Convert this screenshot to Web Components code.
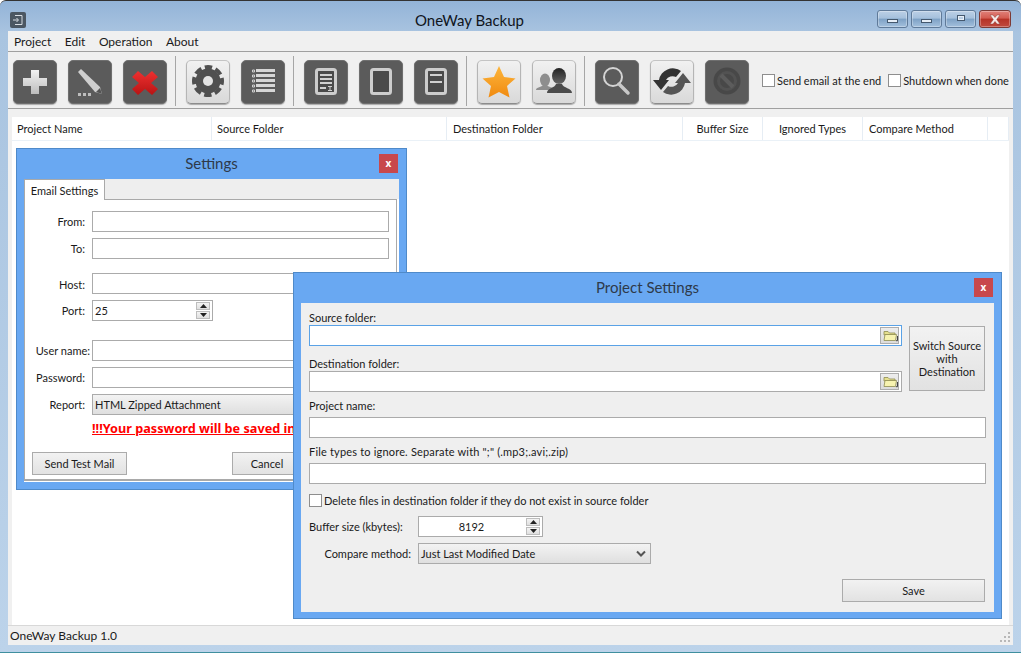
<!DOCTYPE html>
<html><head><meta charset="utf-8">
<style>
html,body{margin:0;padding:0;width:1021px;height:653px;overflow:hidden;background:#fff}
body{font:11px Lato,"Noto Sans",sans-serif;color:#1a1a1a}
</style></head><body>
<app-window>
  <win-controls slot="controls"></win-controls>
  <menu-bar slot="menu"></menu-bar>
  <tool-bar slot="tools"></tool-bar>
  <table-head slot="head"></table-head>
  <settings-dialog></settings-dialog>
  <project-dialog></project-dialog>
</app-window>
<script>
function def(name, css, html){
  customElements.define(name, class extends HTMLElement{
    connectedCallback(){
      if(this.shadowRoot) return;
      const r=this.attachShadow({mode:'open'});
      r.innerHTML='<style>'+css+'</style>'+(typeof html==='function'?html(this):html);
    }
  });
}
const FONT='font-family:Lato,"Noto Sans",sans-serif;font-size:11px;';
const DOCFRAME=`<rect x="12.500" y="9.500" width="19" height="24" rx="2" fill="#4a4a4a" stroke="#cdcdcd" stroke-width="3"/>`;
const ICONS={
plus:`<defs><linearGradient id="g" x1="0" y1="0" x2="0" y2="1"><stop offset="0" stop-color="#f2f2f2"/><stop offset="1" stop-color="#bdbdbd"/></linearGradient></defs><path d="M18 10h8v8h8v8h-8v8h-8v-8h-8v-8h8z" fill="url(#g)"/>`,
pencil:`<path d="M10 12l3-3 19 18 2 7-7-2z" fill="#cfcfcf"/><path d="M28 32l4-4 2 6z" fill="#555"/><path d="M10 33h3v3h-3zM15 33h3v3h-3zM20 33h3v3h-3z" fill="#bdbdbd"/>`,
x:`<defs><linearGradient id="g" x1="0" y1="0" x2="0" y2="1"><stop offset="0" stop-color="#ee3030"/><stop offset="1" stop-color="#b81414"/></linearGradient></defs><path d="M15 11l7 6 7-6 6 6-7 6 7 6-6 6-7-6-7 6-6-6 7-6-7-6z" fill="url(#g)"/>`,
gear:`<circle cx="22" cy="21" r="12.500" fill="#505050"/><circle cx="22" cy="21" r="14" fill="none" stroke="#505050" stroke-width="4" stroke-dasharray="7.400 3.600" stroke-dashoffset="3.700"/><circle cx="22" cy="21" r="5" fill="#e4e4e4"/>`,
list:`<g fill="none" stroke="#cfcfcf"><path d="M11.500 10h2v2h-2zM11.500 15h2v2h-2zM11.500 20h2v2h-2zM11.500 25h2v2h-2zM11.500 30h2v2h-2z"/></g><path d="M15 9h19v3H15zM15 14h19v3H15zM15 19h19v3H15zM15 24h19v3H15zM15 29h19v3H15z" fill="#d6d6d6"/>`,
doctext:DOCFRAME+`<path d="M16 14h12v2H16zM16 18h12v2H16zM16 22h12v2H16zM16 27h6v2h-6zM24 26h4v1h-1.500v3H28v1h-4v-1h1.500v-3H24z" fill="#d0d0d0"/>`,
tablet:DOCFRAME,
doc:DOCFRAME+`<path d="M16 14h12v2H16zM16 21h12v2H16z" fill="#d0d0d0"/>`,
star:`<defs><linearGradient id="g" x1="0" y1="0" x2="0" y2="1"><stop offset="0" stop-color="#fdb63c"/><stop offset="1" stop-color="#f08a10"/></linearGradient></defs><path d="M22 6l5 11 11.500 1.500-8.500 7.500 2.500 11.500L22 32l-10.500 5.500L14 26l-8.500-7.500L17 17z" fill="url(#g)"/>`,
users:`<defs><linearGradient id="g" x1="0" y1="0" x2="0" y2="1"><stop offset="0" stop-color="#222"/><stop offset="1" stop-color="#666"/></linearGradient></defs><ellipse cx="13" cy="20" rx="5" ry="6.500" fill="#8e8e8e"/><path d="M4 30c0-3 6-3 7-5h4c1 2 5 2 6 3v2z" fill="#8e8e8e"/><ellipse cx="27" cy="16" rx="7" ry="8" fill="url(#g)"/><path d="M15 33c0-5 8-5 9-9h6c1 4 10 4 10 9z" fill="#4c4c4c"/>`,
search:`<circle cx="18" cy="17" r="9" fill="none" stroke="#d4d4d4" stroke-width="2"/><path d="M24 24l9 9" stroke="#c9c9c9" stroke-width="3.500" stroke-linecap="round"/>`,
refresh:`<path d="M9 20A14 14 0 0 1 31 11L26 17A7.500 7.500 0 0 0 16 20zM3 20H19L11 30z" fill="#333"/><path d="M35 23A14 14 0 0 1 13 32L18 26A7.500 7.500 0 0 0 28 23zM25 23H41L33 13z" fill="#555"/>`,
stop:`<circle cx="22" cy="21" r="13.500" fill="#484848"/><circle cx="22" cy="21" r="8.500" fill="none" stroke="#525252" stroke-width="3"/><path d="M16 15l12 12" stroke="#5c5c5c" stroke-width="4"/>`
};
def('tool-button',`
:host{display:block;width:44px;height:44px;flex:none}
div{width:44px;height:44px;box-sizing:border-box;border-radius:5px;border:1px solid #6f6f6f;background:#5b5b5b;box-shadow:0 1px 1px #aaa}
:host([light]) div{background:linear-gradient(#f1f1f1,#d9d9d9);border-color:#c4c4c4 #b5b5b5 #8c8c8c}
svg{display:block;margin:-1px}
`,h=>`<div><svg width="44" height="44" viewBox="0 0 44 44">${ICONS[h.getAttribute('icon')]}</svg></div>`);
def('tool-sep',`:host{display:block;width:1px;height:50px;background:#a6a6a6;flex:none;margin:-2px 10px 0 8px;align-self:center}`,'');
def('check-box',`
:host{display:inline-flex;align-items:center;gap:2px;white-space:nowrap}
i{display:block;width:11px;height:11px;border:1px solid #8e8e8e;background:#fff;flex:none}
`,`<i></i><span><slot></slot></span>`);
def('tool-bar',`
:host{display:flex;align-items:center;height:56px;padding:4px 0 0 5px;box-sizing:border-box}
.g{display:flex;gap:11px}
check-box{margin-top:-3px}
`,`<div class="g"><tool-button icon="plus"></tool-button><tool-button icon="pencil"></tool-button><tool-button icon="x"></tool-button></div><tool-sep></tool-sep>
<div class="g"><tool-button icon="gear" light></tool-button><tool-button icon="list"></tool-button></div><tool-sep></tool-sep>
<div class="g"><tool-button icon="doctext"></tool-button><tool-button icon="tablet"></tool-button><tool-button icon="doc"></tool-button></div><tool-sep></tool-sep>
<div class="g"><tool-button icon="star" light></tool-button><tool-button icon="users" light></tool-button></div><tool-sep></tool-sep>
<div class="g"><tool-button icon="search"></tool-button><tool-button icon="refresh" light></tool-button><tool-button icon="stop"></tool-button></div>
<check-box style="margin-left:13px">Send email at the end</check-box><check-box style="margin-left:7px">Shutdown when done</check-box>`);
def('menu-bar',`
:host{display:flex;height:20px;align-items:center;padding-left:6px;gap:13.500px;font-size:12px;border-bottom:1px solid #a0a0a0;background:#f0f0f0;box-sizing:content-box}
`,`<span>Project</span><span>Edit</span><span>Operation</span><span>About</span>`);
def('table-head',`
:host{display:grid;grid-template-columns:200px 235px 236px 80px 100px 125px 1fr;height:23px;background:#fff;border-bottom:1px solid #eaf1f7;box-sizing:content-box}
span{display:flex;align-items:center;border-right:1px solid #e6edf4;white-space:nowrap}
.c{justify-content:center}
`,`<span style="padding-left:5px">Project Name</span><span style="padding-left:5px">Source Folder</span><span style="padding-left:6px">Destination Folder</span><span class="c">Buffer Size</span><span class="c">Ignored Types</span><span style="padding-left:6px">Compare Method</span><span></span>`);
def('win-controls',`
:host{display:flex;gap:3px;position:absolute;right:10px;top:9px}
b{display:flex;align-items:center;justify-content:center;width:31px;height:18px;box-sizing:border-box;border:1px solid #5f7a99;border-radius:3px;background:linear-gradient(#bcd0e6 0,#a5c0dc 45%,#7ea1c5 50%,#a3c0dd 100%);box-shadow:inset 0 0 0 1px rgba(255,255,255,.3)}
b.r{width:32px;background:linear-gradient(#e0827a 0,#d45b50 45%,#b63226 50%,#c04a3e 100%);border-color:#7d3a35}
i{display:block;width:9px;height:2px;background:#e6eef7;border:1px solid #44586e;margin-top:3px}
i.m{width:6px;height:4px;margin:-2px 0 0;background:#b9cee4;border-width:1px;box-shadow:inset 0 0 0 1px #e6eef7}
svg{display:block}
`,`<b><i></i></b><b><i></i></b><b><i class="m"></i></b><b class="r"><svg width="14" height="11" viewBox="0 0 14 11"><path d="M2 1h3l2 2.500L9 1h3L8.700 5.500 12 10H9L7 7.500 5 10H2l3.300-4.500z" fill="#f6ecea" stroke="#8a3d36" stroke-width=".5"/></svg></b>`);
def('app-window',`
:host{display:flex;flex-direction:column;position:relative;width:1021px;height:653px;box-sizing:border-box;padding:0 8px 7px;border-radius:6px 6px 0 0;
 background:linear-gradient(#93b4d8 0,#a9c4e0 32px,#bcd3ea 100%);border-top:1px solid #333;border-bottom:1px solid #3f8f9f;${FONT}}
.title{height:30px;flex:none;display:flex;align-items:center;justify-content:center;font-size:15px;color:#10151c;padding:7px 82px 0 0;box-sizing:border-box}
.ico{position:absolute;left:10px;top:11px;width:16px;height:16px}
.client{flex:1;display:flex;flex-direction:column;background:#f0f0f0;min-height:0}
.body{flex:1;display:flex;flex-direction:column;padding:8px 4px 0;min-height:0;border-top:1px solid #a0a0a0}
.list{flex:1;background:#fff}
.status{height:19px;flex:none;border-top:1px solid #d8d8d8;display:flex;align-items:center;padding-left:2px;position:relative;background:#f0f0f0;font-size:12px}
.grip{position:absolute;right:2px;bottom:2px}
`,`<svg class="ico" viewBox="0 0 16 16"><rect width="16" height="16" rx="2" fill="#4b5763"/><path d="M5 3.500h7v9H5M3 8h5M6.500 6l2 2-2 2" fill="none" stroke="#d7dde3"/></svg>
<div class="title">OneWay Backup</div><slot name="controls"></slot>
<div class="client"><slot name="menu"></slot><slot name="tools"></slot>
<div class="body"><div class="list"><slot name="head"></slot></div></div>
<div class="status">OneWay Backup 1.0<svg class="grip" width="11" height="11" viewBox="0 0 11 11" fill="#b8b8b8"><path d="M8 0h2v2H8zM4 4h2v2H4zM8 4h2v2H8zM0 8h2v2H0zM4 8h2v2H4zM8 8h2v2H8z"/></svg></div></div><slot></slot>`);
def('float-dialog',`
:host{display:block;position:absolute;box-sizing:border-box;background:#69a8f2;border:1px solid #4f8ac9;padding:0 7px 7px}
.t{display:flex;align-items:center;justify-content:center;font-size:15px;color:#2e3a4a;height:30px;padding-bottom:2px;box-sizing:border-box}
.x{position:absolute;right:8px;top:5px;width:19px;height:19px;background:#c8484c;color:#fff;display:flex;align-items:center;justify-content:center;font:bold 10px "Noto Sans",sans-serif;padding-bottom:2px;box-sizing:border-box}
`,h=>`<div class="t">${h.getAttribute('heading')}</div><div class="x">x</div><slot></slot>`);
def('text-box',`
:host{display:block;height:21px;box-sizing:border-box;border:1px solid #ababab;background:#fff;position:relative;flex:none}
:host([focus]){border-color:#5aa2e6}
`,`<slot></slot>`);
def('folder-button',`
:host{position:absolute;right:2px;top:1px;width:19px;height:17px;box-sizing:border-box;border:1px solid #adadad;background:linear-gradient(#ededed,#dcdcdc);display:block}
svg{display:block;margin:1px 0 0 2px}
`,`<svg width="15" height="13" viewBox="0 0 15 13"><path d="M1 2.500h4l1.500 1.500h5.500v2H1z" fill="#e6e08e" stroke="#8e8c50" stroke-width=".8"/><path d="M1 11.500l1-6h11.500l-1 6z" fill="#f7f3b0" stroke="#8e8c50" stroke-width=".8"/><path d="M13 11.700h1.500V7" fill="none" stroke="#444"/></svg>`);
def('spin-box',`
:host{display:flex;align-items:center;height:21px;box-sizing:border-box;border:1px solid #ababab;background:#fff;position:relative;flex:none;padding-left:2px}
.s{position:absolute;right:2px;top:1px;width:14px;height:17px;display:flex;flex-direction:column;gap:1px}
.s b{display:flex;flex:1;align-items:center;justify-content:center;background:linear-gradient(#f4f4f4,#dfdfdf);border:1px solid #bdbdbd}
.s svg{display:block}
`,`<span style="flex:1"><slot></slot></span><div class="s"><b><svg width="7" height="4"><path d="M3.500 0L7 4H0z" fill="#222"/></svg></b><b><svg width="7" height="4"><path d="M0 0h7L3.500 4z" fill="#222"/></svg></b></div>`);
def('combo-box',`
:host{display:flex;align-items:center;height:21px;box-sizing:border-box;border:1px solid #ababab;background:linear-gradient(#f3f3f3,#dfdfdf);position:relative;flex:none;padding-left:2px;white-space:nowrap;overflow:hidden}
svg{position:absolute;right:4px;top:6px}
`,`<slot></slot><svg width="10" height="8" viewBox="0 0 10 8"><path d="M1 1.500l4 4 4-4" fill="none" stroke="#555" stroke-width="2"/></svg>`);
def('push-button',`
:host{display:flex;align-items:center;justify-content:center;box-sizing:border-box;border:1px solid #ababab;background:linear-gradient(#f2f2f2,#e2e2e2);flex:none;text-align:center;line-height:13px}
`,`<slot></slot>`);
def('form-row',`
:host{display:flex;align-items:center;height:21px;flex:none;position:relative}
.l{flex:none;width:var(--lw,60px);text-align:right;white-space:nowrap;margin-right:7px}
`,`<div class="l"><slot name="label"></slot></div><slot></slot>`);
def('settings-dialog',`
:host{display:block;position:absolute;left:16px;top:147px;width:391px;height:342px}
float-dialog{left:0;top:0;width:391px;height:342px}
.tab{width:81px;height:21px;box-sizing:border-box;border:1px solid #a9a9a9;border-bottom:0;background:#fff;display:flex;align-items:center;justify-content:center;position:relative;z-index:1;white-space:nowrap}
.strip{background:#eeeeee;height:20px}
.pane{background:#fff;border:1px solid #a9a9a9;border-width:1px 1px 2px;height:282px;box-sizing:border-box;margin-right:2px;padding:11px 0 0 0;display:flex;flex-direction:column}
.wrap{background:#fff;height:303px}
text-box,combo-box{width:297px}
.warn{font:700 12.700px "Noto Sans",sans-serif;color:#f00;text-decoration:underline;margin:5px 0 0 67px;white-space:nowrap;height:16px;line-height:16px}
.btns{display:flex;margin:16px 0 0 7px;gap:105px}
`,`<float-dialog heading="Settings"><div class="wrap"><div class="strip"><div class="tab">Email Settings</div></div>
<div class="pane">
<form-row><span slot="label">From:</span><text-box></text-box></form-row>
<form-row style="margin-top:6px"><span slot="label">To:</span><text-box></text-box></form-row>
<form-row style="margin-top:14px"><span slot="label" style="display:inline-block;padding-top:2px">Host:</span><text-box></text-box></form-row>
<form-row style="margin-top:6px"><span slot="label">Port:</span><spin-box style="width:121px">25</spin-box></form-row>
<form-row style="margin-top:19px"><span slot="label" style="margin-right:-5px">User name:</span><text-box></text-box></form-row>
<form-row style="margin-top:6px"><span slot="label">Password:</span><text-box></text-box></form-row>
<form-row style="margin-top:6px"><span slot="label">Report:</span><combo-box>HTML Zipped Attachment</combo-box></form-row>
<div class="warn">!!!Your password will be saved in</div>
<div class="btns"><push-button style="width:95px;height:23px">Send Test Mail</push-button><push-button style="width:70px;height:23px">Cancel</push-button></div>
</div></div></float-dialog>`);
def('project-dialog',`
:host{display:block;position:absolute;left:293px;top:271px;width:709px;height:347px}
float-dialog{left:0;top:0;width:709px;height:347px}
.p{background:#efefef;height:309px;box-sizing:border-box;padding:7px 8px 0;display:flex;flex-direction:column;position:relative}
label{display:block;height:15px;line-height:15px;white-space:nowrap}
.two{display:grid;grid-template-columns:593px 76px;column-gap:7px}
.two>div{display:flex;flex-direction:column}
.two push-button{margin-top:16px;height:65px;padding:0 2px}
text-box{width:593px}
.w{width:677px}
form-row{--lw:102px}
.save{align-self:flex-end;width:143px;height:23px;margin:15px 1px 0 0}
`,`<float-dialog heading="Project Settings"><div class="p">
<div class="two"><div><label>Source folder:</label><text-box focus><folder-button></folder-button></text-box>
<label style="margin-top:10px">Destination folder:</label><text-box><folder-button></folder-button></text-box></div>
<push-button>Switch Source<br>with<br>Destination</push-button></div>
<label style="margin-top:6px">Project name:</label><text-box class="w" style="margin-top:4px"></text-box>
<label style="margin-top:6px;letter-spacing:.18px">File types to ignore. Separate with ";" (.mp3;.avi;.zip)</label><text-box class="w" style="margin-top:4px"></text-box>
<check-box style="margin-top:8px;height:16px;display:flex">Delete files in destination folder if they do not exist in source folder</check-box>
<form-row style="margin-top:8px"><span slot="label" style="display:block;text-align:left">Buffer size (kbytes):</span><spin-box style="width:125px;padding-right:20px;text-align:center">8192</spin-box></form-row>
<form-row style="margin-top:6px"><span slot="label">Compare method:</span><combo-box style="width:233px">Just Last Modified Date</combo-box></form-row>
<push-button class="save">Save</push-button>
</div></float-dialog>`);
</script>
</body></html>
